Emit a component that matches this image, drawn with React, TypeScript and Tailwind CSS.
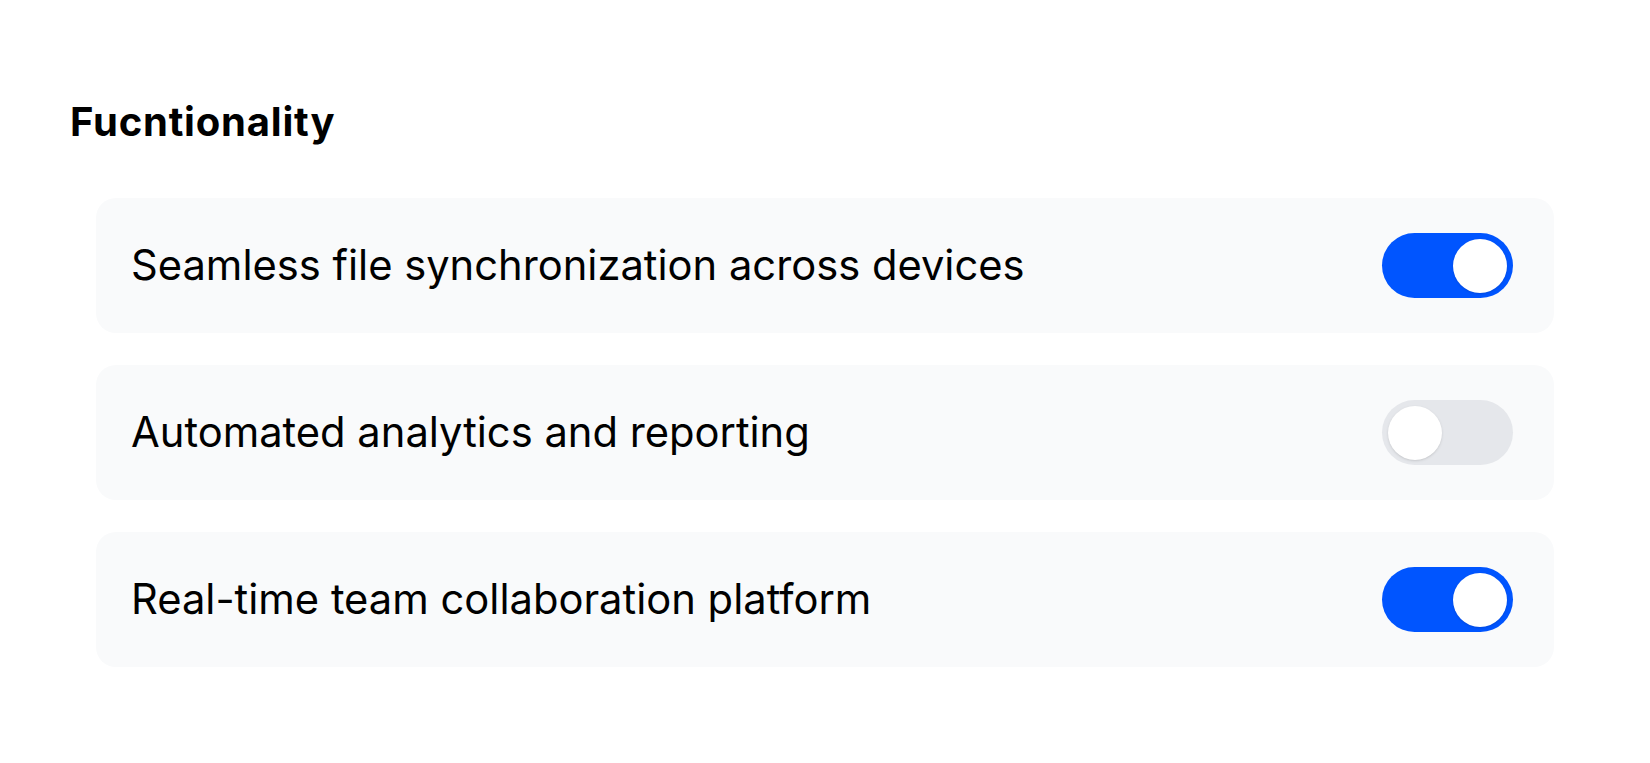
import React, { useState } from "react";

const items = [
  { label: "Seamless file synchronization across devices", on: true },
  { label: "Automated analytics and reporting", on: false },
  { label: "Real-time team collaboration platform", on: true },
];

function Toggle({ on, onClick }: { on: boolean; onClick: () => void }) {
  return (
    <button
      onClick={onClick}
      className={`flex h-[65px] w-[131px] shrink-0 items-center rounded-full px-[6px] ${
        on ? "justify-end bg-[#0055ff]" : "justify-start bg-[#e5e7eb]"
      }`}
    >
      <span className="block h-[54px] w-[54px] rounded-full bg-white shadow-sm" />
    </button>
  );
}

export default function App() {
  const [state, setState] = useState(items.map((i) => i.on));
  return (
    <div
      className="min-h-[763px] w-full bg-white pt-[102px] pl-[70px] text-black"
      style={{ fontFamily: "Inter, 'Noto Sans', sans-serif" }}
    >
      <h2 className="text-[40px] font-bold leading-none tracking-[0.02em]">Fucntionality</h2>
      <div className="mt-[56px] ml-[26px] flex w-[1458px] flex-col gap-[32px]">
        {items.map((it, i) => (
          <div
            key={it.label}
            className="flex h-[135px] items-center justify-between rounded-[20px] bg-[#f9fafb] pl-[35px] pr-[41px]"
          >
            <span className="text-[41.7px] leading-none">{it.label}</span>
            <Toggle
              on={state[i]}
              onClick={() => setState((s) => s.map((v, j) => (j === i ? !v : v)))}
            />
          </div>
        ))}
      </div>
    </div>
  );
}
